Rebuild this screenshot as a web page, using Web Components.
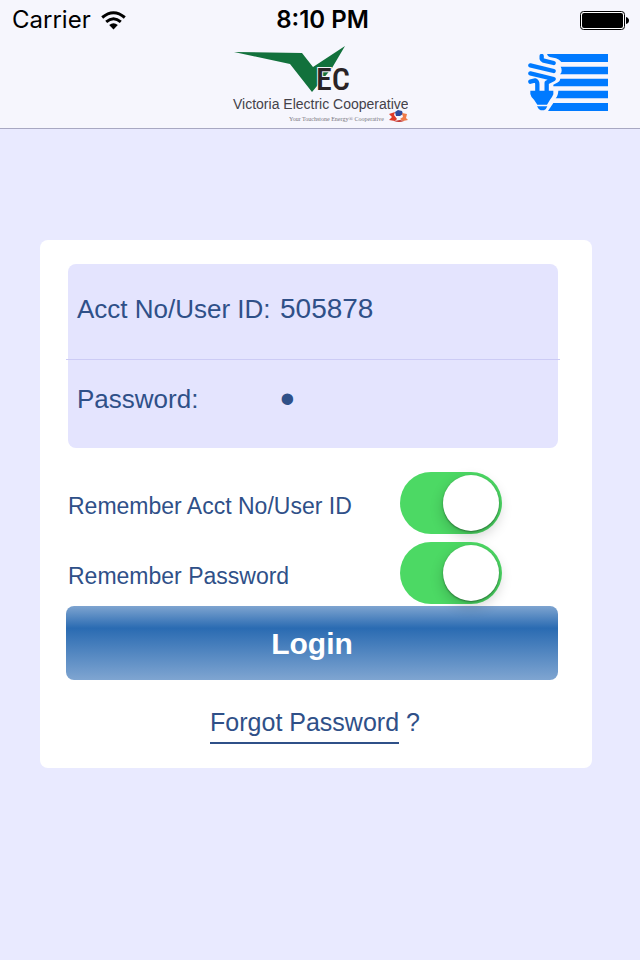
<!DOCTYPE html>
<html lang="en">
<head>
<meta charset="utf-8">
<meta name="viewport" content="width=device-width, initial-scale=1">
<title>Victoria Electric Cooperative</title>
<style>
  body {
    margin: 0;
    min-height: 100vh;
    background: #e9eaff;
    color: #2f5088;
    font-family: "Liberation Sans", Arial, sans-serif;
  }
</style>
</head>
<body>
<vec-app></vec-app>

<script>
// helper: open shadow root from an html string
function shadow(el, html) {
  const root = el.attachShadow({ mode: 'open' });
  root.innerHTML = html;
  return root;
}

// ---------- status bar ----------
class StatusBar extends HTMLElement {
  constructor() {
    super();
    shadow(this, `
      <style>
        :host {
          display: grid;
          grid-template-columns: 1fr auto 1fr;
          align-items: center;
          height: 40px;
          padding: 0 11px 0 12px;
          color: #000;
          font: 24px/40px Inter, Roboto, sans-serif;
        }
        .left { display: flex; align-items: center; gap: 10px; }
        .time { padding-left: 4px; font-weight: 600; }
        .battery { justify-self: end; display: block; }
      </style>
      <div class="left">
        <span>Carrier</span>
        <svg width="25" height="19" viewBox="0 0 25 19" aria-hidden="true">
          <g fill="none" stroke="#000" stroke-width="3">
            <path d="M1.200 6.500 Q12.500 -3 23.800 6.500"/>
            <path d="M5.200 10.800 Q12.500 4.600 19.800 10.800"/>
          </g>
          <path d="M8.200 14 Q12.500 10.400 16.800 14 L12.500 18.400 Z"/>
        </svg>
      </div>
      <span class="time">8:10 PM</span>
      <svg class="battery" width="49" height="19" viewBox="0 0 49 19" aria-hidden="true">
        <rect x="0.500" y="0.500" width="44" height="18" rx="3" fill="#fff" stroke="#000"/>
        <rect x="2" y="2" width="41" height="15" rx="2"/>
        <path d="M46 6 Q49 7 49 9.500 Q49 12 46 13 Z"/>
      </svg>
    `);
  }
}

// ---------- company logo ----------
class VecLogo extends HTMLElement {
  constructor() {
    super();
    shadow(this, `
      <style>
        :host { display: block; }
        svg { display: block; }
      </style>
      <svg width="176" height="80" viewBox="0 0 176 80" role="img" aria-label="Victoria Electric Cooperative">
        <path d="M2 6 L70 7 L81 21 L113 0 L100 22 L80 46 L58 18 Z" fill="#12713c"/>
        <text x="84" y="44" font-family="Roboto Condensed, Roboto, sans-serif" font-size="32"
          font-weight="500" fill="#2a2326" stroke="#f6f6fc" stroke-width="2" paint-order="stroke">EC</text>
        <text x="1" y="63" font-size="14" font-family="Liberation Sans, sans-serif" fill="#444249">Victoria Electric Cooperative</text>
        <text x="57" y="75" font-size="6" font-family="Liberation Serif, serif" fill="#77757c">Your Touchstone Energy® Cooperative</text>
        <path d="M157 68 L163 66 L162 69 L165 73 L163 75 L157 74 L160 71 Z" fill="#df3a28"/>
        <path d="M163 66 L166 64 L170 65 L171 68 L168 70 L164 70 Z" fill="#2d4a9c"/>
        <path d="M170 67 L175 68 L174 72 L176 74 L171 75 L168 73 L171 71 Z" fill="#f07b48"/>
        <path d="M162 75 Q167 77 172 75 L168 74 Z" fill="#c2352f"/>
      </svg>
    `);
  }
}

// ---------- menu button, lamp over five bars ----------
class MenuButton extends HTMLElement {
  constructor() {
    super();
    shadow(this, `
      <style>
        :host { display: block; }
        button { display: block; padding: 0; border: 0; background: none; color: #007aff; cursor: pointer; }
        svg { display: block; }
      </style>
      <button type="button" aria-label="Menu">
        <svg width="80" height="57" viewBox="0 0 240 171" fill="currentColor">
          <path d="M57 0 H240 V24 H100 Q94 17 84 13 L65 9 Q59 7 57 0 Z"/>
          <path d="M98 38 H240 V61 H96 Q101 56 101 50 Q101 43 98 38 Z"/>
          <path d="M97 74 H240 V97 H76 V92 L90 85 Q96 81 97 74 Z"/>
          <path d="M91 110 H240 V133 H83 Q90 126 91 110 Z"/>
          <path d="M76 147 H240 V171 H60 Z"/>
          <g fill="none" stroke="currentColor" stroke-width="13" stroke-linecap="round" stroke-linejoin="round">
            <path d="M41 6 V14 Q42 18 47 20 L77 27"/>
            <path d="M7 34 L77 51"/>
            <path d="M7 58 L77 75 L56 86 V112"/>
            <path d="M7 83 L22 79 Q28 82 28 90 V112"/>
          </g>
          <path d="M7 110 H76 V121 Q73 129 67 136 L57 152 H28 L18 137 Q8 128 7 120 Z"/>
          <path d="M27 157 H58 Q55 166 48 169 H38 Q31 166 27 157 Z"/>
        </svg>
      </button>
    `);
  }
}

// ---------- labelled text field ----------
class LoginField extends HTMLElement {
  connectedCallback() {
    if (this.shadowRoot) return;
    const root = shadow(this, `
      <style>
        :host { display: block; }
        .row { display: grid; grid-template-columns: 212px 1fr; align-items: center; }
        label { padding-left: 9px; font-size: 26px; line-height: 32px; white-space: nowrap; }
        input {
          width: 100%; height: 32px; padding: 0; box-sizing: border-box;
          border: 0; outline: 0; background: none; color: inherit;
          font: 28px/32px "Liberation Sans", Arial, sans-serif;
        }
        input[type=password] { height: 40px; font-size: 42px; line-height: 40px; }
      </style>
      <div class="row">
        <label for="field"></label>
        <input id="field">
      </div>
    `);
    const input = root.querySelector('input');
    root.querySelector('label').textContent = this.getAttribute('label');
    input.type = this.getAttribute('type') || 'text';
    input.value = this.getAttribute('value') || '';
  }
}

// ---------- on/off switch with a label ----------
class ToggleRow extends HTMLElement {
  constructor() {
    super();
    shadow(this, `
      <style>
        :host { display: block; }
        .row { display: flex; align-items: center; justify-content: space-between; }
        label { padding-top: 6px; font-size: 23px; line-height: 30px; white-space: nowrap; }
        input {
          appearance: none;
          display: flex;
          flex: none;
          width: 102px;
          height: 62px;
          margin: 0;
          padding: 3px;
          box-sizing: border-box;
          border-radius: 31px;
          background: #ddd;
          cursor: pointer;
        }
        input::before {
          content: "";
          width: 56px;
          height: 56px;
          border-radius: 50%;
          background: #fff;
          box-shadow: 0 1px 2px rgba(0, 0, 0, 0.4), 0 5px 14px rgba(0, 0, 0, 0.2);
        }
        input:checked { background: #4cd964; justify-content: flex-end; }
      </style>
      <div class="row">
        <label for="toggle"><slot></slot></label>
        <input id="toggle" type="checkbox" role="switch" checked>
      </div>
    `);
  }
}

// ---------- login card ----------
class LoginCard extends HTMLElement {
  constructor() {
    super();
    shadow(this, `
      <style>
        :host { display: block; background: #fff; border-radius: 8px; padding: 24px 34px 24px 26px; }
        .fields { margin-left: 2px; border-radius: 8px; background: #e4e4fe; }
        login-field { padding: 29px 0 34px; }
        login-field + hr + login-field { padding: 19px 0 29px; }
        hr { height: 1px; margin: 0 -2px; border: 0; background: #cccbf5; }
        .toggles { display: grid; gap: 8px; margin: 24px 56px 2px 2px; }
        .login {
          display: block; width: 100%; height: 74px; padding: 2px 0 0;
          border: 0; border-radius: 8px; color: #fff; cursor: pointer;
          background: linear-gradient(#7ea4d0, #2a6bb2 30%, #7fa5d1);
          font: bold 30px/72px "Liberation Sans", Arial, sans-serif;
        }
        .forgot { margin: 24px 0 0; padding-left: 6px; text-align: center; font-size: 25px; line-height: 36px; }
        a { display: inline-block; padding-bottom: 2px; color: inherit; text-decoration: none; border-bottom: 2px solid; }
      </style>
      <form onsubmit="return false">
        <div class="fields">
          <login-field label="Acct No/User ID:" value="505878"></login-field>
          <hr>
          <login-field label="Password:" type="password" value="1"></login-field>
        </div>
        <div class="toggles">
          <toggle-row>Remember Acct No/User ID</toggle-row>
          <toggle-row>Remember Password</toggle-row>
        </div>
        <button class="login" type="submit">Login</button>
        <p class="forgot"><a href="#forgot">Forgot Password</a> ?</p>
      </form>
    `);
  }
}

// ---------- page ----------
class VecApp extends HTMLElement {
  constructor() {
    super();
    shadow(this, `
      <style>
        :host { display: block; }
        header { background: #f6f6fd; border-bottom: 1px solid #a8a8c2; }
        nav {
          display: grid;
          grid-template-columns: 1fr auto 1fr;
          align-items: start;
          height: 82px;
          padding: 6px 32px 0;
        }
        vec-logo { grid-column: 2; }
        menu-button { justify-self: end; padding-top: 8px; }
        main { padding: 111px 48px 40px 40px; }
      </style>
      <header>
        <status-bar></status-bar>
        <nav>
          <vec-logo></vec-logo>
          <menu-button></menu-button>
        </nav>
      </header>
      <main><login-card></login-card></main>
    `);
  }
}

customElements.define('status-bar', StatusBar);
customElements.define('vec-logo', VecLogo);
customElements.define('menu-button', MenuButton);
customElements.define('login-field', LoginField);
customElements.define('toggle-row', ToggleRow);
customElements.define('login-card', LoginCard);
customElements.define('vec-app', VecApp);
</script>
</body>
</html>
